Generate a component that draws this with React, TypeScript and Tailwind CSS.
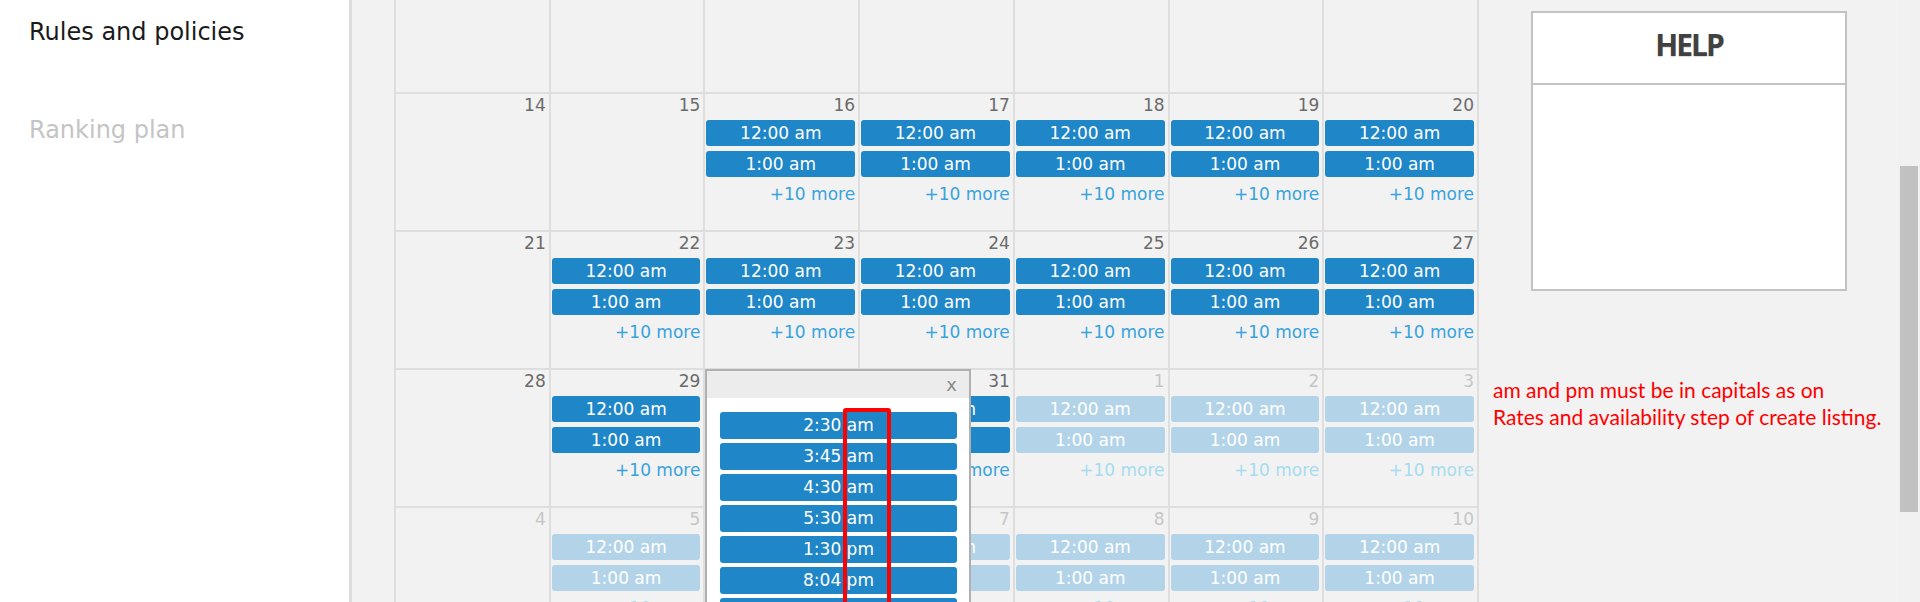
import React from "react";

type Day = { n: number; bars: boolean; faded: boolean; hidden?: boolean };

const rows: Day[][] = [
  // top week is scrolled out of view, only the empty cells show
  [7, 8, 9, 10, 11, 12, 13].map((n) => ({ n, bars: false, faded: false, hidden: true })),
  [14, 15, 16, 17, 18, 19, 20].map((n) => ({ n, bars: n >= 16, faded: false })),
  [21, 22, 23, 24, 25, 26, 27].map((n) => ({ n, bars: n >= 22, faded: false })),
  [28, 29, 30, 31].map((n) => ({ n, bars: n >= 29, faded: false })).concat(
    [1, 2, 3].map((n) => ({ n, bars: true, faded: true }))
  ),
  [4, 5, 6, 7, 8, 9, 10].map((n) => ({ n, bars: n >= 5, faded: true })),
];

const popupTimes = ["2:30 am", "3:45 am", "4:30 am", "5:30 am", "1:30 pm", "8:04 pm", "9:15 pm"];

const font = "font-['DejaVu_Sans',sans-serif]";

function Cell({ day }: { day: Day }) {
  const barBg = day.faded ? "bg-[#b3d4e8]" : "bg-[#1f86c8]";
  return (
    <div className="h-[138px] border-l-2 border-t-2 border-[#dedede] pr-[3px] text-[17px]">
      {!day.hidden && (
        <div
          className={`pt-[1px] text-right leading-[20px] ${day.faded ? "text-[#c6c6c6]" : "text-[#6b6b6b]"}`}
        >
          {day.n}
        </div>
      )}
      {day.bars && (
        <>
          <div className={`mt-[5px] ml-[1px] h-[26px] rounded-[3px] text-center leading-[26px] text-white ${barBg}`}>
            12:00 am
          </div>
          <div className={`mt-[5px] ml-[1px] h-[26px] rounded-[3px] text-center leading-[26px] text-white ${barBg}`}>
            1:00 am
          </div>
          <div
            className={`mt-[7px] text-right leading-[20px] ${day.faded ? "text-[#a6dcf0]" : "text-[#38a3dc]"}`}
          >
            +10 more
          </div>
        </>
      )}
    </div>
  );
}

export default function App() {
  return (
    <div className={`relative flex h-[602px] w-[1920px] overflow-hidden bg-[#f2f2f2] ${font}`}>
      {/* left menu */}
      <aside className="w-[352px] shrink-0 border-r-[3px] border-[#dcdcdc] bg-white pl-[29px] pt-[18px] text-[24px] leading-[28px]">
        <div className="text-[#1a1a1a]">Rules and policies</div>
        <div className="mt-[70px] text-[#c4c4c4]">Ranking plan</div>
      </aside>

      {/* calendar */}
      <div className="shrink-0 pl-[42px]">
        <div className="-mt-[46px] grid w-[1085px] grid-cols-7 border-r-2 border-[#dedede]">
          {rows.flat().map((d, i) => (
            <Cell key={i} day={d} />
          ))}
        </div>
      </div>

      {/* right column */}
      <div className="flex-1">
        <div className="ml-[52px] mt-[11px] h-[280px] w-[316px] border-2 border-[#c3c3c3] bg-white">
          <div className="flex h-[72px] justify-center border-b-2 border-[#c3c3c3] pt-[14px]">
            <span className="font-['Open_Sans',sans-serif] text-[30px] font-bold leading-[36px] tracking-[-2px] text-[#414141] [text-shadow:0_1px_1px_rgba(0,0,0,0.15)]">
              HELP
            </span>
          </div>
        </div>
        <p className="ml-[14px] mt-[85px] font-['Lato',sans-serif] text-[21px] leading-[27px] text-[#ff0000]">
          am and pm must be in capitals as on
          <br />
          Rates and availability step of create listing.
        </p>
      </div>

      {/* scrollbar */}
      <div className="w-[22px] shrink-0 bg-[#f1f1f1] pl-[2px]">
        <div className="mt-[166px] h-[346px] w-[18px] bg-[#c1c1c1]" />
      </div>

      {/* more popup */}
      <div className="absolute left-[705px] top-[369px] h-[260px] w-[266px] border-2 border-[#b0b0b0] bg-white">
        <div className="flex h-[27px] items-center justify-end bg-[#ececec] pr-[12px] text-[18px] leading-none text-[#8a8a8a]">
          x
        </div>
        <div className="flex flex-col gap-[4px] pl-[13px] pr-[12px] pt-[14px] text-[17px]">
          {popupTimes.map((t) => (
            <div key={t} className="h-[27px] rounded-[3px] bg-[#1f86c8] text-center leading-[27px] text-white">
              {t}
            </div>
          ))}
        </div>
      </div>

      {/* annotation */}
      <div className="absolute left-[843px] top-[408px] h-[220px] w-[48px] rounded-[3px] border-4 border-[#ff0000]" />
    </div>
  );
}
